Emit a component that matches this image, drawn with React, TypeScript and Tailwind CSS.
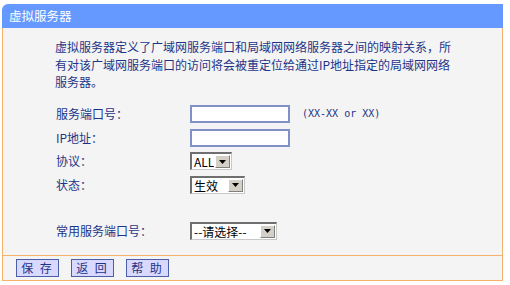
const font = { fontFamily: '"Noto Sans CJK SC", "Liberation Sans", sans-serif' }

function Select({ value, width }: { value: string; width: string }) {
  return (
    <div
      className={`${width} h-[18px] flex items-stretch bg-white border-t-2 border-l-2 border-t-[#6f6f6f] border-l-[#6f6f6f] border-b border-r border-b-[#c8c8c8] border-r-[#c8c8c8]`}
    >
      <span className="flex-1 pl-[2px] text-[12px] leading-[15px] text-black whitespace-nowrap overflow-hidden">
        {value}
      </span>
      <span className="w-[15px] m-[1px] bg-[#d4d0c8] border-t border-l border-t-white border-l-white border-b border-r border-b-[#808080] border-r-[#808080] flex items-center justify-center">
        <svg width="7" height="4" viewBox="0 0 7 4">
          <path d="M0 0h7L3.5 4z" fill="#000" />
        </svg>
      </span>
    </div>
  )
}

function Row({ label, h, children }: { label: string; h: string; children: React.ReactNode }) {
  return (
    <div className={`flex items-center ${h}`}>
      <span className="w-[134px] text-[12px] text-[#1d3487]">{label}</span>
      {children}
    </div>
  )
}

export default function App() {
  return (
    <div className="w-[510px] h-[285px] bg-white pt-[4px] pl-[2px]" style={font}>
      <div className="w-[501px]">
        {/* header */}
        <div className="h-[24px] bg-[#6699ff] rounded-tl-[6px] flex items-center pl-[7px] text-[12.5px] text-white">
          虚拟服务器
        </div>

        {/* body */}
        <div className="h-[227px] bg-[#f4f4f4] border-l border-r border-[#f5b26b]">
          <p className="pl-[52px] pt-[10px] text-[12px] leading-[17.5px] text-[#1d3487]">
            虚拟服务器定义了广域网服务端口和局域网网络服务器之间的映射关系，所
            <br />
            有对该广域网服务端口的访问将会被重定位给通过IP地址指定的局域网网络
            <br />
            服务器。
          </p>

          <div className="pl-[53px] pt-[11px]">
            <Row label="服务端口号：" h="h-[24px]">
              <input className="w-[100px] h-[18px] bg-white border-2 border-[#8190c6] outline-none" />
              <span className="ml-[12px] text-[10px] text-[#1d3487]" style={{ fontFamily: '"DejaVu Sans Mono", monospace' }}>
                (XX-XX or XX)
              </span>
            </Row>
            <Row label="IP地址：" h="h-[24px]">
              <input className="w-[100px] h-[18px] bg-white border-2 border-[#8190c6] outline-none" />
            </Row>
            <Row label="协议：" h="h-[23px]">
              <Select value="ALL" width="w-[42px]" />
            </Row>
            <Row label="状态：" h="h-[24px]">
              <Select value="生效" width="w-[55px]" />
            </Row>
            <div className="h-[22px]" />
            <Row label="常用服务端口号：" h="h-[24px]">
              <Select value="--请选择--" width="w-[87px]" />
            </Row>
          </div>
        </div>

        {/* buttons */}
        <div className="h-[26px] bg-[#f4f4f4] border border-[#f5b26b] flex items-center gap-[12px] pl-[13px]">
          {['保 存', '返 回', '帮 助'].map((t) => (
            <button
              key={t}
              className="w-[43px] h-[18px] bg-[#d9d9ff] border border-[#4a5fa8] text-[12px] leading-[16px] text-[#1d3487] tracking-[2px]"
            >
              {t}
            </button>
          ))}
        </div>
      </div>
    </div>
  )
}
